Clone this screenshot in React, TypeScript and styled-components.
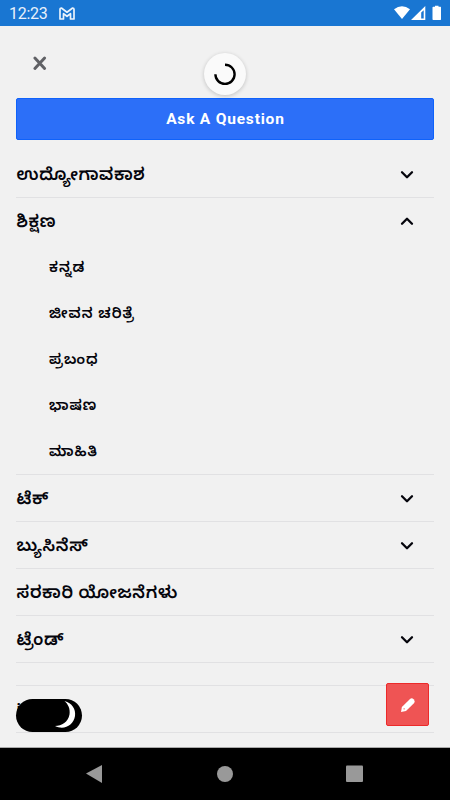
import React from 'react';
import styled, { createGlobalStyle } from 'styled-components';

const Global = createGlobalStyle`
  *{box-sizing:border-box}
  body{margin:0;background:#f1f1f1}
`;
const Screen = styled.div`
  position:relative;width:450px;height:800px;display:flex;flex-direction:column;overflow:hidden;
  background:#f1f1f1;color:#05050c;font-family:Roboto,"Noto Sans Kannada","Noto Sans",sans-serif;
`;
const StatusBar = styled.header`
  height:26px;flex:none;background:#1976d2;color:#fff;display:flex;align-items:center;padding:0 8px 0 9px;
`;
const Clock = styled.span`font-size:16px;line-height:26px;width:50px;padding-top:2px;color:#e8f1fb;letter-spacing:-.3px;`;
const StatusIcons = styled.div`margin-left:auto;display:flex;align-items:center;`;
const Content = styled.main`flex:1;min-height:0;overflow:hidden;padding:0 16px;`;
const TopRow = styled.div`height:72px;display:flex;padding:29px 0 0 16px;`;
const AskButton = styled.button`
  display:block;width:418px;height:42px;margin:0 0 11px .4px;padding:0;border:1px solid #0f62fb;border-radius:2px;background:#2c6ff8;color:#fff;
  font:700 15.5px/40px Roboto,sans-serif;letter-spacing:.8px;
`;
const Section = styled.section`border-bottom:1px solid #e1e1e3;width:418px;`;
const Row = styled.div<{ $h?: number }>`
  height:${p => p.$h ?? 46}px;display:flex;align-items:center;justify-content:space-between;padding:0 19px 0 .5px;
`;
const Label = styled.span`
  font-size:17px;font-weight:600;line-height:24px;letter-spacing:.7px;white-space:nowrap;
`;
const SubRow = styled.div`height:46px;display:flex;align-items:center;padding-left:33px;`;
const SubLabel = styled.span`font-size:14.5px;font-weight:600;line-height:22px;letter-spacing:1px;white-space:nowrap;padding-top:2px;`;
const Loader = styled.div`
  position:absolute;left:204px;top:53px;width:42px;height:42px;border-radius:50%;background:#fafafa;
  box-shadow:0 1px 4px rgba(0,0,0,.2);
`;
const Toggle = styled.div`position:absolute;left:16px;top:699px;width:66px;height:33px;border-radius:17px;background:#000;`;
const Edit = styled.button`
  position:absolute;left:386px;top:683px;width:43px;height:43px;padding:0;border:1px solid #ec2a2a;border-radius:2px;background:#ef5454;
  display:flex;align-items:center;justify-content:center;
`;
const NavBar = styled.nav`height:53px;flex:none;border-top:1px solid #aaa;background:#000;`;

const Chevron = ({ up }: { up?: boolean }) => (
  <svg width="16" height="12" viewBox="0 0 16 12" fill="none" stroke="#05050c" strokeWidth="2.3" strokeLinecap="round" strokeLinejoin="round">
    <path d={up ? 'M3 8.8 8 3.8 13 8.8' : 'M3 4.2 8 9.2 13 4.2'} />
  </svg>
);

type Item = { label: string; icon?: 'up' | 'down'; children?: string[] };
const items: Item[] = [
  { label: 'ಉದ್ಯೋಗಾವಕಾಶ', icon: 'down' },
  { label: 'ಶಿಕ್ಷಣ', icon: 'up', children: ['ಕನ್ನಡ', 'ಜೀವನ ಚರಿತ್ರೆ', 'ಪ್ರಬಂಧ', 'ಭಾಷಣ', 'ಮಾಹಿತಿ'] },
  { label: 'ಟೆಕ್', icon: 'down' },
  { label: 'ಬ್ಯುಸಿನೆಸ್', icon: 'down' },
  { label: 'ಸರಕಾರಿ ಯೋಜನೆಗಳು' },
  { label: 'ಟ್ರೆಂಡ್', icon: 'down' },
];

export default function App() {
  return (
    <Screen>
      <Global />
      <StatusBar>
        <Clock>12:23</Clock>
        <svg width="16" height="13" viewBox="0 0 16 13" fill="none" stroke="#eaf3fc" strokeWidth="1.7" strokeLinejoin="round">
          <path d="M1 2.2Q1 1 2.4 1L8 5.2 13.6 1Q15 1 15 2.2V12H11.5V6.7L8 9.3 4.5 6.7V12H1Z" />
        </svg>
        <StatusIcons>
          <svg width="49" height="16" viewBox="0 0 49 16" fill="#fff">
            <path d="M1 4.2Q9-1.8 17 4.2L9 14Z" />
            <path fillRule="evenodd" d="M32.3 1V15H18ZM30.7 5.2 28.2 7.5V13.6H30.7Z" />
            <path d="M42 1.7V.8H45.5V1.7H47.5Q48 1.7 48 2.4V14.3Q48 15 47.5 15H40.2Q39.5 15 39.5 14.3V2.4Q39.5 1.7 40.2 1.7Z" />
          </svg>
        </StatusIcons>
      </StatusBar>
      <Content>
        <TopRow>
          <svg width="16" height="16" viewBox="0 0 16 16" stroke="#606165" strokeWidth="3" strokeLinecap="round">
            <path d="M2.9 3 12.6 13.4M12.6 3 2.9 13.4" />
          </svg>
        </TopRow>
        <AskButton>Ask A Question</AskButton>
        {items.map(it => (
          <Section key={it.label}>
            <Row>
              <Label>{it.label}</Label>
              {it.icon && <Chevron up={it.icon === 'up'} />}
            </Row>
            {it.children?.map(c => <SubRow key={c}><SubLabel>{c}</SubLabel></SubRow>)}
          </Section>
        ))}
        <Section><Row $h={22} /></Section>
        <Section><Row><Label>i</Label></Row></Section>
      </Content>
      <NavBar>
        <svg width="450" height="52" viewBox="0 0 450 52" fill="#999">
          <path d="M86 25.5 102 17V35Z" />
          <circle cx="225" cy="26" r="8" />
          <rect x="346" y="17.5" width="17" height="16.5" rx="1" />
        </svg>
      </NavBar>
      <Loader>
        <svg width="42" height="42" viewBox="0 0 42 42" fill="none" stroke="#000" strokeWidth="2.4">
          <path d="M21 11.7A9.6 9.6 0 1 1 11.4 21.3" />
        </svg>
      </Loader>
      <Toggle>
        <svg width="66" height="33" viewBox="0 0 66 33" fill="#fff">
          <path d="M48.5 2C56 4 60 10 59 17 57.5 26.5 48 31.5 39 27 46 27 52 23 53.5 15.5 54.5 10 52 5 48.5 2Z" />
        </svg>
      </Toggle>
      <Edit aria-label="Edit">
        <svg width="16" height="16" viewBox="0 0 16 16" fill="#fff">
          <path d="M1 15 1.9 10 10 2Q11.7.6 13.6 2.2 15.6 4.1 14.2 6L6 13.9Z" />
          <circle cx="4.1" cy="11.8" r=".6" fill="#ef3b3b" />
        </svg>
      </Edit>
    </Screen>
  );
}
